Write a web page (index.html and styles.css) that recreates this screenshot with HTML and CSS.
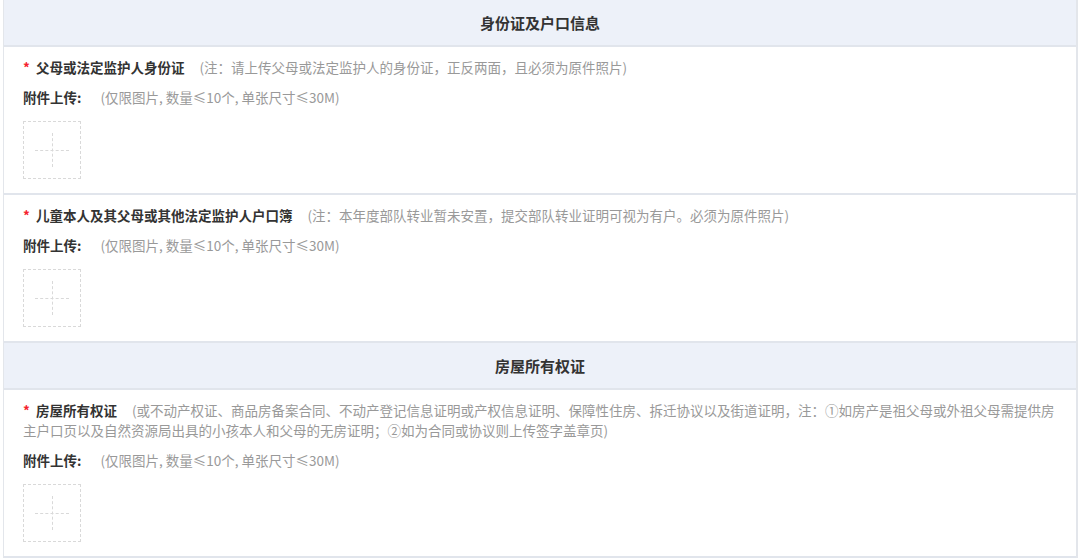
FILE: index.html
```html
<!DOCTYPE html>
<html lang="zh-CN">

<head>
    <meta charset="UTF-8">
    <meta name="viewport" content="width=device-width, initial-scale=1.0">
    <title>材料上传</title>
    <link rel="stylesheet" href="styles.css">
</head>

<body>
    <div class="form-wrap">
        <div class="group-title">身份证及户口信息</div>

        <div class="item">
            <div class="item-title">
                <span class="req">*</span>
                <span class="name">父母或法定监护人身份证</span>
                <span class="tip">(注：请上传父母或法定监护人的身份证，正反两面，且必须为原件照片)</span>
            </div>
            <div class="upload-label">
                <span class="label">附件上传:</span>
                <span class="tip">(仅限图片, 数量≤10个, 单张尺寸≤30M)</span>
            </div>
            <div class="upload-box"><span class="plus"></span></div>
        </div>

        <div class="item">
            <div class="item-title">
                <span class="req">*</span>
                <span class="name">儿童本人及其父母或其他法定监护人户口簿</span>
                <span class="tip">(注：本年度部队转业暂未安置，提交部队转业证明可视为有户。必须为原件照片)</span>
            </div>
            <div class="upload-label">
                <span class="label">附件上传:</span>
                <span class="tip">(仅限图片, 数量≤10个, 单张尺寸≤30M)</span>
            </div>
            <div class="upload-box"><span class="plus"></span></div>
        </div>

        <div class="group-title">房屋所有权证</div>

        <div class="item">
            <div class="item-title">
                <span class="req">*</span>
                <span class="name">房屋所有权证</span>
                <span class="tip">(或不动产权证、商品房备案合同、不动产登记信息证明或产权信息证明、保障性住房、拆迁协议以及街道证明，注：①如房产是祖父母或外祖父母需提供房主户口页以及自然资源局出具的小孩本人和父母的无房证明；②如为合同或协议则上传签字盖章页)</span>
            </div>
            <div class="upload-label">
                <span class="label">附件上传:</span>
                <span class="tip">(仅限图片, 数量≤10个, 单张尺寸≤30M)</span>
            </div>
            <div class="upload-box"><span class="plus"></span></div>
        </div>
    </div>
</body>

</html>
```

FILE: styles.css
```css
* {
    margin: 0;
    padding: 0;
    box-sizing: border-box;
}

body {
    background: #fff;
    font-family: "Noto Sans CJK SC", "Noto Sans", sans-serif;
    font-size: 13.5px;
    color: #333;
}

.form-wrap {
    margin: 0 2px 0 3px;
    border-left: 1px solid #e3e6eb;
    border-right: 2px solid #e3e6eb;
}

.group-title {
    height: 47px;
    line-height: 45px;
    text-align: center;
    font-size: 15px;
    font-weight: bold;
    color: #333;
    background: #edf1f9;
    border-bottom: 2px solid #e1e5ec;
}

.item {
    padding: 10px 20px 14px 19px;
    border-bottom: 2px solid #e1e5ec;
}

.item-title {
    line-height: 20px;
}

.req {
    color: #f5222d;
    font-weight: bold;
    margin-right: 3px;
}

.name {
    font-weight: bold;
    color: #333;
    margin-right: 12px;
}

.tip {
    color: #999;
}

.upload-label {
    margin-top: 10px;
    line-height: 20px;
}

.upload-label .label {
    font-weight: bold;
    color: #333;
    margin-right: 16px;
}

.upload-box {
    position: relative;
    width: 58px;
    height: 58px;
    margin-top: 14px;
    border: 1px dashed #d9d9d9;
}

/* dashed plus sign in the middle */
.plus::before,
.plus::after {
    content: "";
    position: absolute;
    left: 50%;
    top: 50%;
}

.plus::before {
    width: 34px;
    margin-left: -17px;
    border-top: 1px dashed #d9d9d9;
}

.plus::after {
    height: 34px;
    margin-top: -17px;
    border-left: 1px dashed #d9d9d9;
}
```
